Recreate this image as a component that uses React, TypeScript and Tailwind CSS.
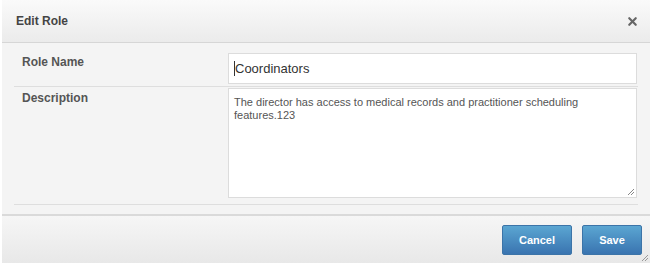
import React from 'react';
import { X } from 'lucide-react';

const FONT = { fontFamily: '"Liberation Sans", Arial, sans-serif' };

const App: React.FC = () => {
  return (
    <div className="w-[652px] h-[266px] bg-white pl-[2px] pr-[2px]" style={FONT}>
      <div className="flex flex-col h-[263px] bg-[#f4f4f4] relative">
        {/* header */}
        <div className="h-[43px] shrink-0 flex items-center justify-between pl-[14px] pr-[11px] bg-gradient-to-b from-[#fafafa] to-[#ebebeb] border-b border-[#d6d6d6]">
          <span className="text-[12px] font-bold text-[#444]">Edit Role</span>
          <X className="w-[13px] h-[13px] text-[#666]" strokeWidth={4} />
        </div>

        {/* body */}
        <div className="flex-1 px-[12px] pt-[10px]">
          <div className="flex border-b border-[#dedede] pb-[2px]">
            <div className="w-[214px] pl-[8px] pt-0 text-[12px] font-bold text-[#555]">Role Name</div>
            <div className="flex-1 pr-[1px]">
              <div className="h-[31px] bg-white border border-[#dcdcdc] flex items-center pl-[5px] text-[13px] text-[#333]">
                <span className="w-px h-[15px] bg-[#333]" />
                Coordinators
              </div>
            </div>
          </div>
          <div className="flex border-b border-[#dedede] pt-[1px] pb-[6px]">
            <div className="w-[214px] pl-[8px] pt-[1px] text-[12px] font-bold text-[#555]">Description</div>
            <div className="flex-1 pr-[1px]">
              <div className="h-[110px] bg-white border border-[#dcdcdc] px-[5px] pt-[7px] text-[11px] leading-[13px] text-[#555] relative">
                The director has access to medical records and practitioner scheduling
                <br />
                features.123
                <svg className="absolute right-[1px] bottom-[1px]" width="8" height="8" viewBox="0 0 8 8">
                  <path d="M7 1 L1 7 M7 4 L4 7" stroke="#888" strokeWidth="1" />
                </svg>
              </div>
            </div>
          </div>
        </div>

        {/* footer */}
        <div className="h-[49px] shrink-0 flex items-center justify-end gap-[10px] pr-[8px] pt-[1px] bg-gradient-to-b from-[#f6f6f6] to-[#e8e8e8] border-t-2 border-[#dadada] relative">
          <button className="w-[70px] h-[30px] rounded-[2px] text-white text-[11px] font-bold bg-gradient-to-b from-[#5ba6d2] to-[#3a74b0] border border-[#3c74a8]">Cancel</button>
          <button className="w-[60px] h-[30px] rounded-[2px] text-white text-[11px] font-bold bg-gradient-to-b from-[#5ba6d2] to-[#3a74b0] border border-[#3c74a8]">Save</button>
          <svg className="absolute right-[1px] bottom-[1px]" width="8" height="8" viewBox="0 0 8 8">
            <path d="M7 1 L1 7 M7 4 L4 7" stroke="#999" strokeWidth="1" />
          </svg>
        </div>
      </div>
    </div>
  );
};

export default App;
